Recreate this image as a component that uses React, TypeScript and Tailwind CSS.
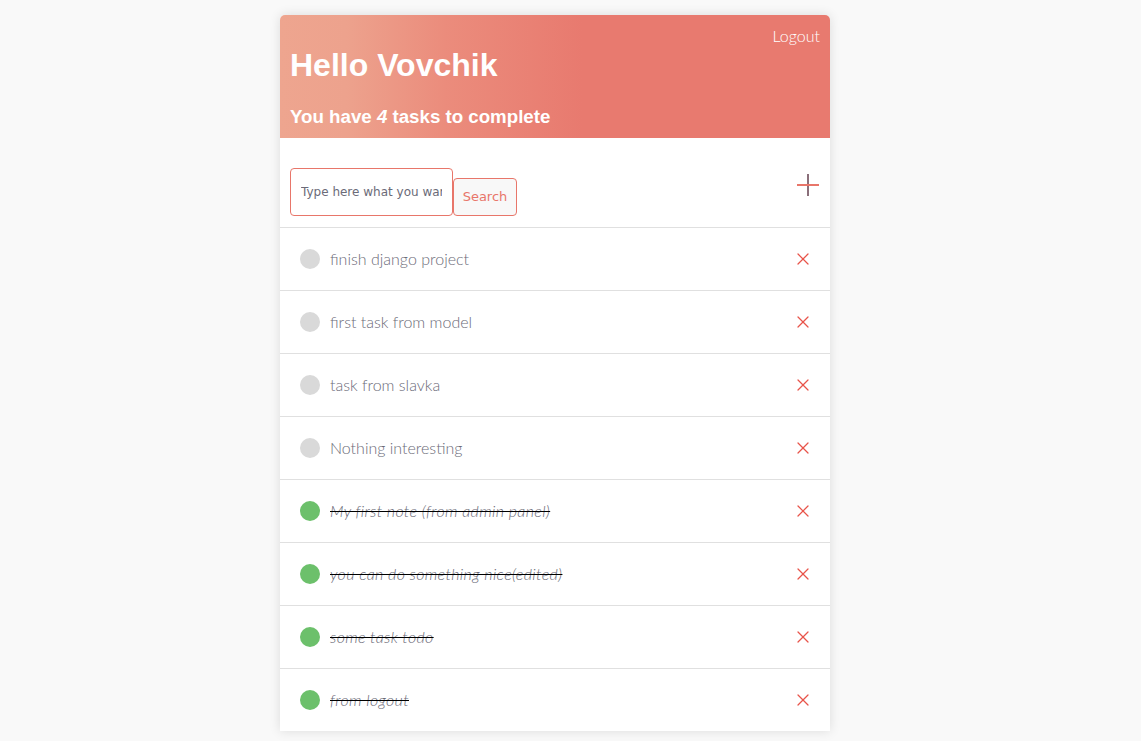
import { X } from 'lucide-react';

const TASKS = [
  { title: 'finish django project', done: false },
  { title: 'first task from model', done: false },
  { title: 'task from slavka', done: false },
  { title: 'Nothing interesting', done: false },
  { title: 'My first note (from admin panel)', done: true },
  { title: 'you can do something nice(edited)', done: true },
  { title: 'some task todo', done: true },
  { title: 'from logout', done: true },
];

export default function App() {
  const left = TASKS.filter((t) => !t.done).length;

  return (
    <div className="min-h-screen bg-[#f9f9f9] pr-[31px] pt-[15px] font-['Lato',sans-serif]">
      <div className="mx-auto w-[550px] rounded-t-[5px] bg-white shadow-[0_0_12px_rgba(0,0,0,0.12)]">
        {/* Header */}
        <div className="relative h-[123px] rounded-t-[5px] bg-[linear-gradient(90deg,#eea58f_0%,#eda28d_12%,#eb8c7c_30%,#e87a6f_55%,#e87a6f_100%)] px-[10px] font-['Liberation_Sans',sans-serif] text-white">
          <button className="absolute right-[10px] top-[11px] font-['Lato',sans-serif] text-[16px] font-light leading-5">
            Logout
          </button>
          <h1 className="pt-[32px] text-[32px] font-bold leading-9">Hello Vovchik</h1>
          <p className="mt-[22px] text-[18.7px] font-bold leading-6">
            You have <i>{left}</i> tasks to complete
          </p>
        </div>

        {/* Search */}
        <div className="flex h-[90px] items-start border-b border-[#e0e0e0] px-[10px] pt-[30px]">
          <input
            className="h-[48px] w-[163px] rounded-[4px] border border-[#e8766a] px-[10px] font-['DejaVu_Sans',sans-serif] text-[12px] text-[#555] outline-none placeholder:text-[#6b6b78]"
            placeholder="Type here what you want to find"
          />
          <button className="mt-[10px] h-[38px] w-[64px] rounded-[4px] border border-[#e8766a] bg-[#f8f8f8] font-['DejaVu_Sans',sans-serif] text-[13px] text-[#e8766a]">
            Search
          </button>
          <button className="ml-auto mr-[1px] mt-[6px]">
            <svg width="22" height="22" viewBox="0 0 22 22">
              <path d="M11 0v22" stroke="#8a6f7a" strokeWidth="2" />
              <path d="M0 11h22" stroke="#e8766a" strokeWidth="2" />
            </svg>
          </button>
        </div>

        {/* Tasks */}
        {TASKS.map((t, i) => (
          <div
            key={t.title}
            className={`flex items-center px-[20px] ${i < TASKS.length - 1 ? 'h-[63px] border-b border-[#e0e0e0]' : 'h-[62px]'}`}
          >
            <span
              className={`h-[20px] w-[20px] shrink-0 rounded-full ${t.done ? 'bg-[#6cc06b]' : 'bg-[#d9d9d9]'}`}
            />
            <span
              className={`ml-[10px] text-[16px] font-light text-[#6b6b78] ${t.done ? 'italic tracking-[0.35px] line-through decoration-black' : ''}`}
            >
              {t.title}
            </span>
            <button className="ml-auto mr-[-3px] text-[#e8544a]">
              <X className="h-[20px] w-[20px]" strokeWidth={1.5} />
            </button>
          </div>
        ))}
      </div>
    </div>
  );
}
